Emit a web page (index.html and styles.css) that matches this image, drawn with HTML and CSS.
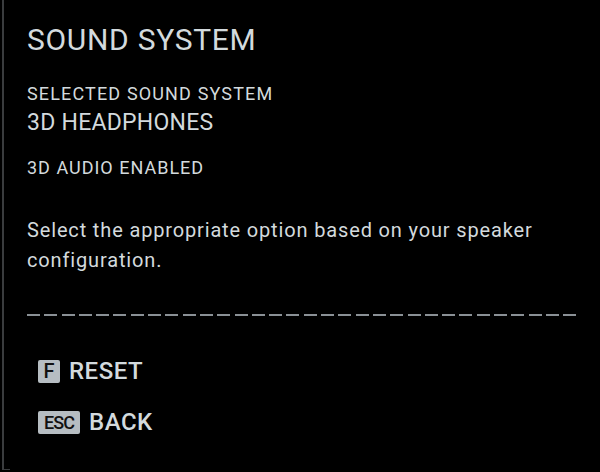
FILE: index.html
```html
<!DOCTYPE html>
<html lang="en">
<head>
    <meta charset="UTF-8">
    <title>Sound System</title>
    <link rel="stylesheet" href="styles.css">
</head>
<body>
    <div class="panel">
        <h1 class="title">SOUND SYSTEM</h1>
        <p class="label">SELECTED SOUND SYSTEM</p>
        <p class="value">3D HEADPHONES</p>
        <p class="status">3D AUDIO ENABLED</p>
        <p class="description">Select the appropriate option based on your speaker configuration.</p>
        <div class="divider"></div>
        <div class="actions">
            <div class="action"><span class="key">F</span><span class="action-label">RESET</span></div>
            <div class="action"><span class="key key-wide">ESC</span><span class="action-label">BACK</span></div>
        </div>
    </div>
</body>
</html>
```

FILE: styles.css
```css
html, body {
    height: 100%;
}
body {
    margin: 0;
    background-color: #000;
    color: #d3dadd;
    font-family: Roboto, "Liberation Sans", sans-serif;
    overflow: hidden;
}
.panel {
    position: relative;
    box-sizing: border-box;
    height: 470px;
    margin-left: 2px;
    border-left: 2px solid #3a3c3e;
    padding: 22px 0 0 23px;
    white-space: nowrap;
}
/* small corner tick at the bottom of the frame */
.panel::after {
    content: "";
    position: absolute;
    left: 0;
    bottom: 0;
    width: 6px;
    height: 1px;
    background-color: #3a3c3e;
}
.title {
    margin: 0;
    font-size: 30px;
    font-weight: 400;
    letter-spacing: 0.7px;
    line-height: 36px;
}
.label {
    margin: 25px 0 0;
    font-size: 18px;
    line-height: 22px;
    letter-spacing: 1.15px;
}
.value {
    margin: 4px 0 0;
    font-size: 23px;
    line-height: 28px;
    letter-spacing: 0.25px;
}
.status {
    margin: 20px 0 0;
    font-size: 18px;
    line-height: 22px;
    letter-spacing: 1px;
}
.description {
    margin: 36px 0 0;
    width: 540px;
    white-space: normal;
    font-size: 20px;
    line-height: 30px;
    letter-spacing: 0.85px;
}
.divider {
    width: 553px;
    height: 2px;
    margin-top: 39px;
    background: repeating-linear-gradient(90deg, #8a9095 0 13px, transparent 13px 17.3px);
}
.actions {
    display: flex;
    flex-direction: column;
    gap: 27px;
    margin-top: 43px;
    padding-left: 11px;
}
.action {
    display: flex;
    align-items: center;
    gap: 9px;
    height: 24px;
}
.key {
    flex-shrink: 0;
    box-sizing: border-box;
    width: 22px;
    height: 23px;
    border-radius: 2px;
    background-color: #b6bdc2;
    color: #111;
    font-size: 20px;
    font-weight: 500;
    display: flex;
    align-items: center;
    justify-content: center;
}
.key-wide {
    width: 42px;
    font-size: 18px;
    letter-spacing: -1px;
}
.action-label {
    font-size: 24px;
    font-weight: 500;
    letter-spacing: 0.5px;
}
```
